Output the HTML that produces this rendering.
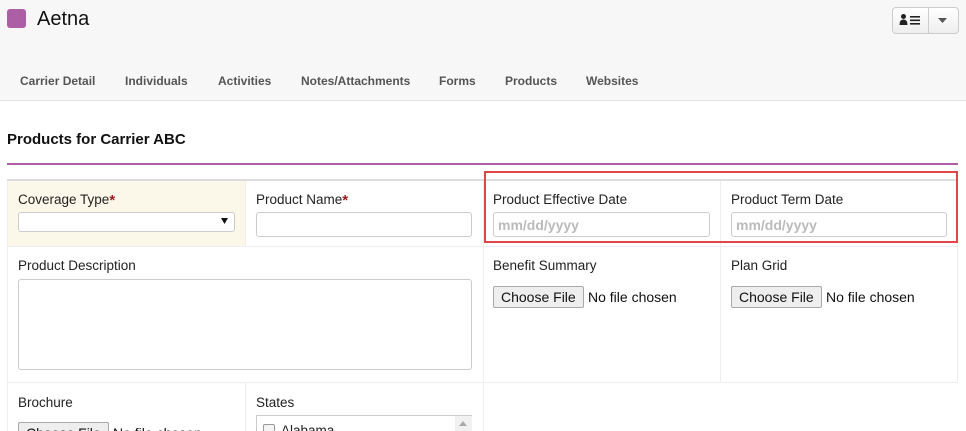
<!DOCTYPE html>
<html><head><style>
*{box-sizing:border-box;margin:0;padding:0}
html,body{width:966px;height:431px;overflow:hidden}
body{background:#fff;font-family:"Liberation Sans",sans-serif;position:relative;color:#222}
.a{position:absolute}
.hdr{left:0;top:0;width:966px;height:101px;background:#f7f7f7;border-bottom:1px solid #e3e3e3}
.tab{top:74px;font-size:12px;font-weight:bold;color:#555}
.lbl{font-size:13.5px;color:#222}
.inp{background:#fff;border:1px solid #ccc;border-radius:3px;height:25px}
.ph{font-size:14px;color:#bbb;font-weight:bold;padding:4px 0 0 4px}
.vl{width:1px;background:#eee}
.hl{height:1px;background:#eee}
.btn{font-size:14px;color:#111;background:#eee;border:1px solid #aaa;border-radius:2px;height:22px;padding:2px 7px;}
.nf{font-size:14px;color:#111}
.star{color:#9b1c1c;font-size:15px;font-weight:bold;vertical-align:top}
</style></head><body>
<div class="a hdr"></div>
<div class="a" style="left:7px;top:9px;width:19px;height:19px;background:#ac5fa5;border-radius:3px"></div>
<div class="a" style="left:37px;top:8px;font-size:20px;color:#111">Aetna</div>
<div class="a" style="left:892px;top:7px;width:67px;height:27px;border:1px solid #ccc;border-radius:4px;background:linear-gradient(#fff,#eee)"></div>
<div class="a" style="left:928px;top:8px;width:1px;height:25px;background:#ccc"></div>
<svg class="a" style="left:899px;top:13px" width="24" height="14"><circle cx="4.5" cy="3.5" r="2.5" fill="#222"/><path d="M0.5 12 Q0.5 6.5 4.5 6.5 Q8.5 6.5 8.5 12Z" fill="#222"/><rect x="11" y="3" width="10" height="1.6" fill="#222"/><rect x="11" y="6.5" width="10" height="1.6" fill="#222"/><rect x="11" y="10" width="10" height="1.6" fill="#222"/></svg>
<svg class="a" style="left:938px;top:18px" width="10" height="6"><path d="M0 0H9L4.5 5Z" fill="#555"/></svg>
<div class="a tab" style="left:20px">Carrier Detail</div>
<div class="a tab" style="left:125px">Individuals</div>
<div class="a tab" style="left:218px">Activities</div>
<div class="a tab" style="left:301px">Notes/Attachments</div>
<div class="a tab" style="left:439px">Forms</div>
<div class="a tab" style="left:505px">Products</div>
<div class="a tab" style="left:586px">Websites</div>
<div class="a" style="left:7px;top:131px;font-size:15px;font-weight:bold;color:#111">Products for Carrier ABC</div>
<div class="a" style="left:7px;top:163px;width:951px;height:2px;background:#ac5fa5"></div>
<div class="a" style="left:7px;top:179px;width:951px;height:2px;background:#ddd"></div>
<div class="a" style="left:8px;top:181px;width:237px;height:65px;background:#fcf8e9"></div>
<div class="a vl" style="left:7px;top:181px;height:250px"></div>
<div class="a vl" style="left:245px;top:181px;height:65px"></div>
<div class="a vl" style="left:483px;top:181px;height:201px"></div>
<div class="a vl" style="left:720px;top:181px;height:201px"></div>
<div class="a vl" style="left:957px;top:181px;height:201px"></div>
<div class="a hl" style="left:7px;top:246px;width:951px"></div>
<div class="a hl" style="left:7px;top:382px;width:951px"></div>
<div class="a vl" style="left:245px;top:382px;height:49px"></div>
<div class="a vl" style="left:483px;top:382px;height:49px"></div>
<div class="a lbl" style="left:18px;top:192px">Coverage Type<span class="star">*</span></div>
<div class="a inp" style="left:18px;top:212px;width:217px;height:20px"></div>
<svg class="a" style="left:221px;top:218px" width="8" height="7"><path d="M0 0H7L3.5 6Z" fill="#111"/></svg>
<div class="a lbl" style="left:256px;top:192px">Product Name<span class="star">*</span></div>
<div class="a inp" style="left:256px;top:212px;width:216px"></div>
<div class="a lbl" style="left:493px;top:192px">Product Effective Date</div>
<div class="a inp ph" style="left:493px;top:212px;width:217px">mm/dd/yyyy</div>
<div class="a lbl" style="left:731px;top:192px">Product Term Date</div>
<div class="a inp ph" style="left:731px;top:212px;width:216px">mm/dd/yyyy</div>
<div class="a" style="left:484px;top:171px;width:474px;height:72px;border:2px solid #e04848"></div>
<div class="a lbl" style="left:18px;top:258px">Product Description</div>
<div class="a inp" style="left:18px;top:279px;width:454px;height:91px"></div>
<div class="a lbl" style="left:493px;top:258px">Benefit Summary</div>
<div class="a btn" style="left:493px;top:286px">Choose File</div>
<div class="a nf" style="left:588px;top:289px">No file chosen</div>
<div class="a lbl" style="left:731px;top:258px">Plan Grid</div>
<div class="a btn" style="left:731px;top:286px">Choose File</div>
<div class="a nf" style="left:826px;top:289px">No file chosen</div>
<div class="a lbl" style="left:18px;top:395px">Brochure</div>
<div class="a btn" style="left:18px;top:422px">Choose File</div>
<div class="a nf" style="left:113px;top:425px">No file chosen</div>
<div class="a lbl" style="left:256px;top:395px">States</div>
<div class="a" style="left:256px;top:415px;width:216px;height:20px;border:1px solid #ccc;border-right:none"></div>
<div class="a" style="left:455px;top:416px;width:17px;height:20px;background:#f1f1f1"></div>
<svg class="a" style="left:459px;top:421px" width="9" height="5"><path d="M0 5H8L4 0Z" fill="#aaa"/></svg>
<div class="a" style="left:263px;top:424px;width:12px;height:12px;border:1px solid #999;border-radius:2px;background:#f4f4f4"></div>
<div class="a lbl" style="left:281px;top:423px">Alabama</div>
</body></html>
